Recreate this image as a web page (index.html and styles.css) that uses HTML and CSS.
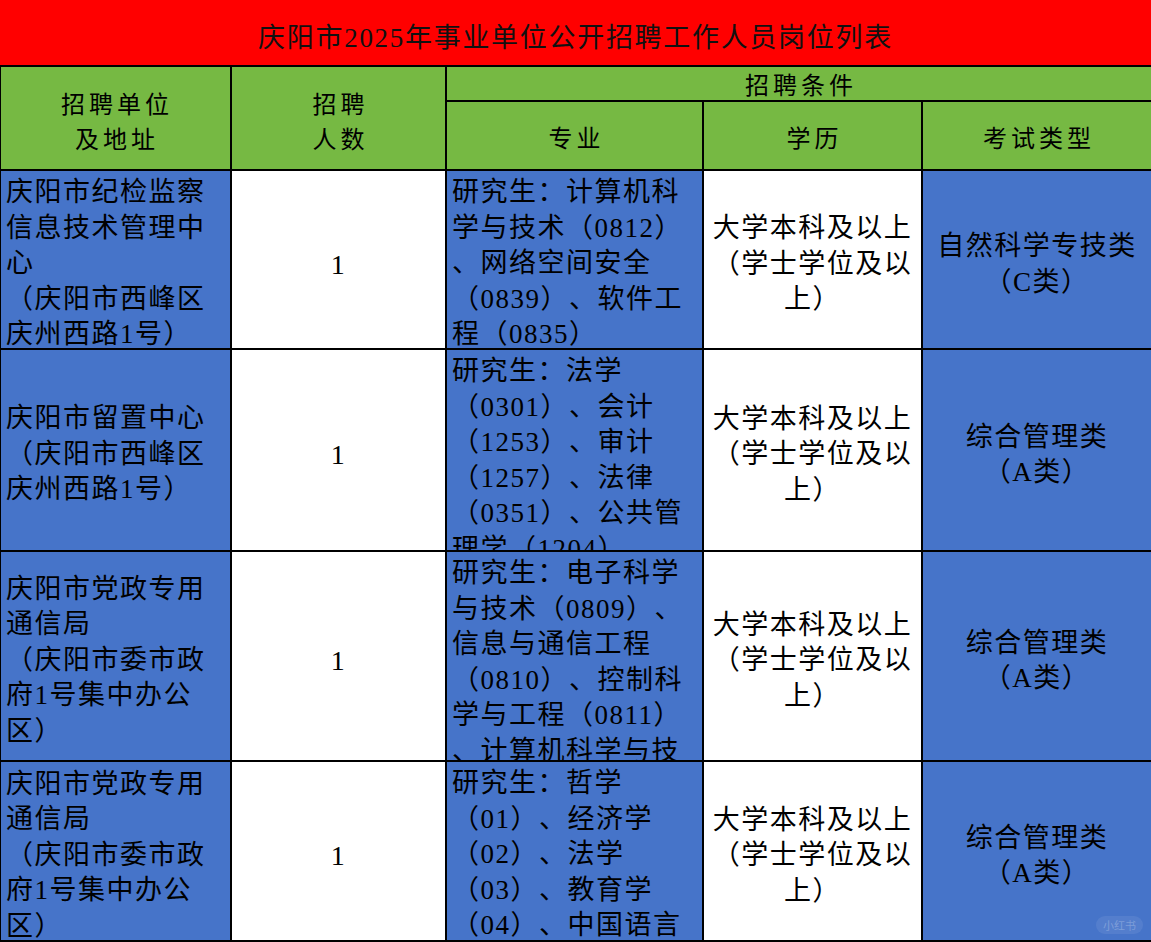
FILE: index.html
```html
<!DOCTYPE html>
<html lang="zh-CN">
<head>
<meta charset="utf-8">
<title>庆阳市2025年事业单位公开招聘工作人员岗位列表</title>
<link rel="stylesheet" href="styles.css">
</head>
<body>
<div class="sheet">
  <div class="title">庆阳市2025年事业单位公开招聘工作人员岗位列表</div>

  <div class="hd c1 span2">招聘单位<br>及地址</div>
  <div class="hd span2">招聘<br>人数</div>
  <div class="hd cond">招聘条件</div>
  <div class="hd">专业</div>
  <div class="hd">学历</div>
  <div class="hd">考试类型</div>

  <div class="cell blue unit c1">庆阳市纪检监察<br>信息技术管理中<br>心<br>（庆阳市西峰区<br>庆州西路1号）</div>
  <div class="cell white num">1</div>
  <div class="cell blue major">研究生：计算机科<br>学与技术（0812）<br>、网络空间安全<br>（0839）、软件工<br>程（0835）</div>
  <div class="cell white mid">大学本科及以上<br>（学士学位及以<br>上）</div>
  <div class="cell blue mid">自然科学专技类<br>（C类）</div>

  <div class="cell blue unit c1">庆阳市留置中心<br>（庆阳市西峰区<br>庆州西路1号）</div>
  <div class="cell white num">1</div>
  <div class="cell blue major">研究生：法学<br>（0301）、会计<br>（1253）、审计<br>（1257）、法律<br>（0351）、公共管<br>理学（1204）</div>
  <div class="cell white mid">大学本科及以上<br>（学士学位及以<br>上）</div>
  <div class="cell blue mid">综合管理类<br>（A类）</div>

  <div class="cell blue unit c1">庆阳市党政专用<br>通信局<br>（庆阳市委市政<br>府1号集中办公<br>区）</div>
  <div class="cell white num">1</div>
  <div class="cell blue major">研究生：电子科学<br>与技术（0809）、<br>信息与通信工程<br>（0810）、控制科<br>学与工程（0811）<br>、计算机科学与技<br>术（0812）</div>
  <div class="cell white mid">大学本科及以上<br>（学士学位及以<br>上）</div>
  <div class="cell blue mid">综合管理类<br>（A类）</div>

  <div class="cell blue unit c1">庆阳市党政专用<br>通信局<br>（庆阳市委市政<br>府1号集中办公<br>区）</div>
  <div class="cell white num">1</div>
  <div class="cell blue major">研究生：哲学<br>（01）、经济学<br>（02）、法学<br>（03）、教育学<br>（04）、中国语言<br>文学（05）</div>
  <div class="cell white mid">大学本科及以上<br>（学士学位及以<br>上）</div>
  <div class="cell blue mid">综合管理类<br>（A类）</div>

  <div class="mark">小红书</div>
</div>
</body>
</html>
```
FILE: styles.css
```css
html, body {
  margin: 0;
  padding: 0;
  background: #ffffff;
}

.sheet {
  position: relative;
  width: 1151px;
  height: 942px;
  display: grid;
  grid-template-columns: 230px 213px 255px 217px 228px;
  grid-template-rows: 65px 33px 67px 177px 200px 208px 178px;
  gap: 2px;
  padding-bottom: 2px;
  box-sizing: border-box;
  background: #000000;
  font-family: "Liberation Serif", "Noto Sans CJK SC", serif;
  color: #000000;
  overflow: hidden;
  text-spacing-trim: space-all;
}

.title {
  grid-column: 1 / -1;
  background: #ff0000;
  display: flex;
  align-items: center;
  justify-content: center;
  padding-top: 6px;
  font-size: 27px;
  letter-spacing: 1.7px;
  color: #111111;
}

.hd {
  background: #76b943;
  display: flex;
  align-items: center;
  justify-content: center;
  text-align: center;
  font-size: 24px;
  letter-spacing: 4px;
  line-height: 35px;
  padding-left: 4px;
  padding-top: 7px;
  box-sizing: border-box;
}

.hd.span2 {
  grid-row: 2 / 4;
  padding-top: 10px;
}

.hd.cond {
  grid-column: 3 / 6;
  padding-top: 6px;
}

.c1 {
  box-shadow: inset 1px 0 0 #000000;
}

.cell {
  overflow: hidden;
  display: flex;
  font-size: 27px;
  letter-spacing: 1.5px;
  line-height: 35.5px;
  box-sizing: border-box;
}

.blue {
  background: #4674c9;
}

.white {
  background: #ffffff;
}

.unit {
  align-items: center;
  padding: 9px 0 0 6px;
}

.num {
  align-items: center;
  justify-content: center;
  font-size: 28px;
  padding-top: 10px;
}

.major {
  align-items: flex-start;
  padding: 4px 0 0 5px;
}

.mid {
  align-items: center;
  justify-content: center;
  text-align: center;
  padding-top: 10px;
}

.mark {
  position: absolute;
  right: 8px;
  bottom: 8px;
  padding: 1px 7px;
  border-radius: 10px;
  background: rgba(255, 255, 255, 0.08);
  color: rgba(255, 255, 255, 0.25);
  font-family: "Noto Sans CJK SC", sans-serif;
  font-size: 11px;
  line-height: 16px;
}
```
